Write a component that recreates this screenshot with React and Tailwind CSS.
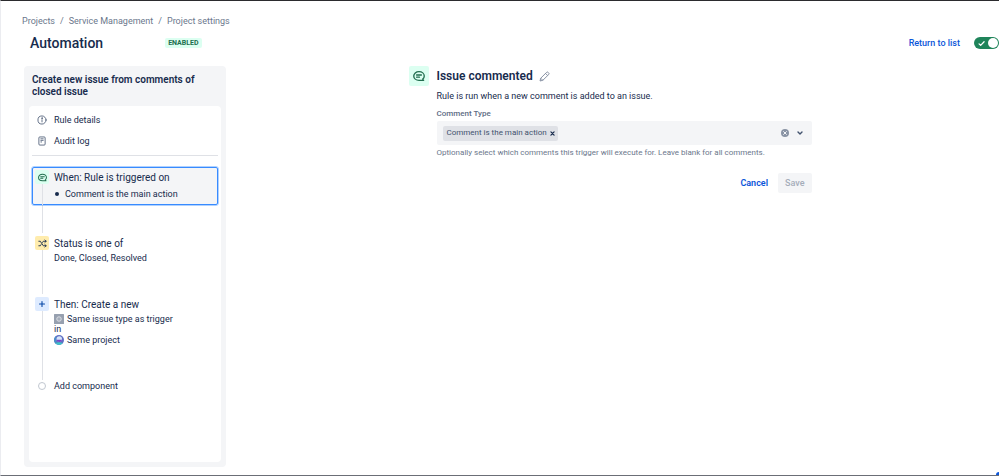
import { useState } from "react";

const CommentIcon = ({ className }) => (
    <svg viewBox="0 0 16 16" className={className} fill="none" stroke="currentColor" strokeWidth="1.8" strokeLinecap="round" strokeLinejoin="round" aria-hidden="true">
        <path d="M13 12.200C14.300 11.200 15 9.700 15 8c0-3.300-3-5.800-7-5.800S1 4.700 1 8s3 5.800 7 5.800h6.200l-1.200-1.600" />
        <path d="M4.800 6.700h6.400M4.800 9.500h3.800" />
    </svg>
);

const ShuffleIcon = ({ className }) => (
    <svg viewBox="0 0 16 16" className={className} fill="none" stroke="currentColor" strokeWidth="1.600" strokeLinecap="round" strokeLinejoin="round" aria-hidden="true">
        <path d="M1.500 4h2.600l5.300 8h5M1.500 12h2.600l1.400-2.100M8 6.100L9.400 4h5" />
        <path d="M12.300 1.900L14.500 4l-2.200 2.100M12.300 9.900l2.200 2.100-2.200 2.100" />
    </svg>
);

const PlusIcon = ({ className }) => (
    <svg viewBox="0 0 16 16" className={className} fill="none" stroke="currentColor" strokeWidth="2.200" strokeLinecap="round" aria-hidden="true">
        <path d="M8 3v10M3 8h10" />
    </svg>
);

const InfoIcon = () => (
    <svg viewBox="0 0 16 16" className="w-[10px] h-[10px]" fill="none" stroke="currentColor" strokeWidth="1.300" strokeLinecap="round" aria-hidden="true">
        <circle cx="8" cy="8" r="6.500" />
        <path d="M8 7.500v3.500" />
        <circle cx="8" cy="5" r=".5" fill="currentColor" />
    </svg>
);

const LogIcon = () => (
    <svg viewBox="0 0 16 16" className="w-[10px] h-[10px]" fill="none" stroke="currentColor" strokeWidth="1.300" strokeLinejoin="round" aria-hidden="true">
        <rect x="3" y="1.500" width="10" height="13" rx="1.500" />
        <path d="M5.500 4.500h5M5.500 7h5M5.500 9.500h2.500" />
    </svg>
);

const PencilIcon = () => (
    <svg viewBox="0 0 16 16" className="w-[11px] h-[11px]" fill="none" stroke="currentColor" strokeWidth="1.300" strokeLinejoin="round" aria-hidden="true">
        <path d="M1.500 14.500l1-4L11 2a1.600 1.600 0 0 1 2.300 0l.8.800a1.600 1.600 0 0 1 0 2.300l-8.500 8.400zM9.500 3.500l3 3M2.500 10.500l3 3" />
    </svg>
);

const IssueTypeIcon = () => (
    <svg viewBox="0 0 20 20" className="w-[10px] h-[10px]" aria-hidden="true">
        <rect width="20" height="20" rx="1" fill="#97a0af" />
        <circle cx="10" cy="10" r="4.500" fill="#a5adba" stroke="#dfe1e6" strokeWidth="1.800" />
    </svg>
);

const ProjectIcon = () => (
    <svg viewBox="0 0 20 20" className="w-[10px] h-[10px]" aria-hidden="true">
        <circle cx="10" cy="10" r="10" fill="#5f6fc4" />
        <path d="M0 10a10 10 0 0 1 4-8l1 12-2 3a10 10 0 0 1-3-7z" fill="#4a8fc9" />
        <path d="M2.500 16.500c4-2.500 11-2.500 15 0a10 10 0 0 1-15 0z" fill="#3fc1c9" />
        <circle cx="10.500" cy="8" r="5.500" fill="#d3e4fa" />
        <path d="M5 9.500h11c-.5 3-2.500 4.500-5.500 4.500S5.500 12.500 5 9.500z" fill="#7b45c4" />
    </svg>
);

const Step = ({ icon, tone, title, selected, connector, children }) => (
    <li>
        <button
            type="button"
            className={`flex w-full text-left rounded-xs border px-[2px] py-[2px] ${selected ? "border-[#388bff] bg-[#f4f5f7] outline-1 outline-[#388bff]/40" : "border-transparent"}`}
        >
            <span className="flex flex-col self-stretch -mb-[3px] mr-[5px]">
                <span className={`flex items-center justify-center w-[14px] h-[14px] rounded-xs ${tone}`}>{icon}</span>
                <span className="flex-1 w-px ml-[7px] bg-[#dfe1e6]" />
            </span>
            <span className="block flex-1">
                <span className="block text-[10px] leading-4">{title}</span>
                {children}
            </span>
        </button>
        <div className={`ml-[10px] w-px bg-[#dfe1e6] ${connector}`} />
    </li>
);

export default function App() {
    const [enabled, setEnabled] = useState(true);
    const [types, setTypes] = useState(["Comment is the main action"]);

    return (
        <div className="relative min-h-screen flex flex-col bg-white border-t border-t-[#2b2b2e] border-l border-l-[#ebecf0] border-b border-b-[#6b6e76] font-['Roboto','Liberation_Sans',sans-serif] text-[#172b4d] text-[9px] leading-3">
            <nav aria-label="Breadcrumbs" className="pt-[14px] pl-[21px]">
                <ol className="flex gap-[5px] text-[#6b778c]">
                    <li><a href="#projects">Projects</a></li>
                    <li aria-hidden="true">/</li>
                    <li><a href="#service">Service Management</a></li>
                    <li aria-hidden="true">/</li>
                    <li><a href="#settings">Project settings</a></li>
                </ol>
            </nav>

            <header className="flex items-center pt-[6px] pl-[29px]">
                <h1 className="text-[14px] leading-5 font-medium">Automation</h1>
                <span className="ml-[62px] px-[3px] rounded-xs bg-[#dcfff1] text-[#216e4e] text-[7px] leading-[10px] font-bold">ENABLED</span>
                <a href="#list" className="ml-auto text-[#0c56d9] font-medium">Return to list</a>
                <button
                    type="button"
                    role="switch"
                    aria-checked={enabled}
                    aria-label="Rule enabled"
                    onClick={() => setEnabled(!enabled)}
                    className={`ml-[14px] flex items-center justify-between w-[25px] h-3 pl-1 pr-px rounded-full ${enabled ? "bg-[#1f845a]" : "bg-[#626f86] flex-row-reverse"}`}
                >
                    <svg viewBox="0 0 10 10" className="w-[7px] h-[7px]" fill="none" stroke="white" strokeWidth="1.800" strokeLinecap="round" strokeLinejoin="round" aria-hidden="true">
                        <path d="M1.500 5.500l2.300 2.200L8.700 2.500" />
                    </svg>
                    <span className="w-[10px] h-[10px] rounded-full bg-white" />
                </button>
            </header>

            <div className="flex flex-1 items-stretch pt-[13px] pb-2">
                <aside className="flex flex-col w-[202px] shrink-0 ml-[23px] p-[5px] rounded bg-[#f4f5f7]">
                    <h2 className="px-[3px] pt-[3px] pb-2 text-[10px] leading-3 font-semibold">Create new issue from comments of closed issue</h2>
                    <div className="flex-1 rounded bg-white px-[3px]">
                        <ul className="flex flex-col gap-[9px] pt-2 pb-2 pl-[5px] border-b border-[#dfe1e6]">
                            <li>
                                <a href="#details" className="flex items-center gap-[7px]">
                                    <span className="text-[#44546f]"><InfoIcon /></span>Rule details
                                </a>
                            </li>
                            <li>
                                <a href="#audit" className="flex items-center gap-[7px]">
                                    <span className="text-[#44546f]"><LogIcon /></span>Audit log
                                </a>
                            </li>
                        </ul>

                        <ol className="pt-[11px]">
                            <Step
                                selected
                                title="When: Rule is triggered on"
                                tone="bg-[#dcfff1] text-[#216e4e]"
                                icon={<CommentIcon className="w-[9px] h-[9px]" />}
                                connector="h-[28px]"
                            >
                                <span className="flex items-center gap-[6px] pl-px leading-4">
                                    <span className="w-1 h-1 rounded-full bg-current" />
                                    Comment is the main action
                                </span>
                            </Step>
                            <Step
                                title="Status is one of"
                                tone="bg-[#ffecad] text-[#172b4d]"
                                icon={<ShuffleIcon className="w-[9px] h-[9px]" />}
                                connector="h-[27px]"
                            >
                                <span className="block leading-3">Done, Closed, Resolved</span>
                            </Step>
                            <Step
                                title="Then: Create a new"
                                tone="bg-[#deebff] text-[#0747a6]"
                                icon={<PlusIcon className="w-2 h-2" />}
                                connector="h-[31px]"
                            >
                                <span className="flex items-center gap-[3px] leading-3"><IssueTypeIcon />Same issue type as trigger</span>
                                <span className="block leading-[9px]">in</span>
                                <span className="flex items-center gap-[3px] leading-3"><ProjectIcon />Same project</span>
                            </Step>
                            <li>
                                <button type="button" className="flex items-center gap-2 pl-[6px]">
                                    <span className="w-2 h-2 rounded-full border border-[#c1c7d0] bg-white" />
                                    Add component
                                </button>
                            </li>
                        </ol>
                    </div>
                </aside>

                <main className="flex-1 pr-[5px]">
                    <form className="flex gap-2 w-[403px] mx-auto" onSubmit={(e) => e.preventDefault()}>
                        <span className="flex items-center justify-center shrink-0 w-5 h-5 rounded-xs bg-[#dcfff1] text-[#216e4e]">
                            <CommentIcon className="w-3 h-3" />
                        </span>
                        <div className="flex-1">
                            <div className="flex items-center gap-[6px]">
                                <h2 className="text-[12px] leading-5 font-semibold">Issue commented</h2>
                                <button type="button" aria-label="Rename" className="text-[#7a869a]"><PencilIcon /></button>
                            </div>
                            <p className="pt-1">Rule is run when a new comment is added to an issue.</p>
                            <label htmlFor="comment-type" className="block pt-[6px] text-[8px] text-[#5e6c84] font-medium">Comment Type</label>
                            <div className="flex items-center h-6 mt-px px-[6px] rounded-xs bg-[#f4f5f7]">
                                {types.map((type) => (
                                    <span key={type} className="flex items-center h-[15px] pl-1 pr-[2px] gap-[2px] rounded-xs bg-[#dfe1e6] text-[8px] text-[#42526e]">
                                        {type}
                                        <button type="button" aria-label={`Remove ${type}`} onClick={() => setTypes(types.filter((t) => t !== type))}>
                                            <svg viewBox="0 0 8 8" className="w-[7px] h-[7px]" stroke="#172b4d" strokeWidth="1.400" strokeLinecap="round" aria-hidden="true">
                                                <path d="M2.200 2.200l3.600 3.600M5.800 2.200L2.200 5.800" />
                                            </svg>
                                        </button>
                                    </span>
                                ))}
                                <input id="comment-type" type="text" className="flex-1 min-w-0 h-4 bg-transparent outline-none" />
                                <button type="button" aria-label="Clear all" onClick={() => setTypes([])}>
                                    <svg viewBox="0 0 16 16" className="w-2 h-2" aria-hidden="true">
                                        <circle cx="8" cy="8" r="8" fill="#8993a4" />
                                        <path d="M5.200 5.200l5.600 5.600M10.800 5.200l-5.600 5.600" stroke="#f4f5f7" strokeWidth="2" strokeLinecap="round" />
                                    </svg>
                                </button>
                                <button type="button" aria-label="Open menu" className="ml-[7px] mr-[2px]">
                                    <svg viewBox="0 0 8 8" className="w-2 h-2" fill="none" stroke="#42526e" strokeWidth="1.400" strokeLinecap="round" strokeLinejoin="round" aria-hidden="true">
                                        <path d="M2 3l2 2 2-2" />
                                    </svg>
                                </button>
                            </div>
                            <p className="pt-[2px] text-[8px] text-[#6b778c]">Optionally select which comments this trigger will execute for. Leave blank for all comments.</p>
                            <div className="flex justify-end gap-[10px] pt-[14px]">
                                <button type="button" className="h-5 text-[#0c56d9] font-semibold">Cancel</button>
                                <button type="submit" disabled className="h-5 px-[7px] rounded-xs bg-[#f4f5f7] text-[#a5adba] font-medium">Save</button>
                            </div>
                        </div>
                    </form>
                </main>
            </div>
            <span className="absolute right-0 bottom-0 w-[3px] h-[3px] rounded-tl-full bg-[#0c56d9]" />
        </div>
    );
}
